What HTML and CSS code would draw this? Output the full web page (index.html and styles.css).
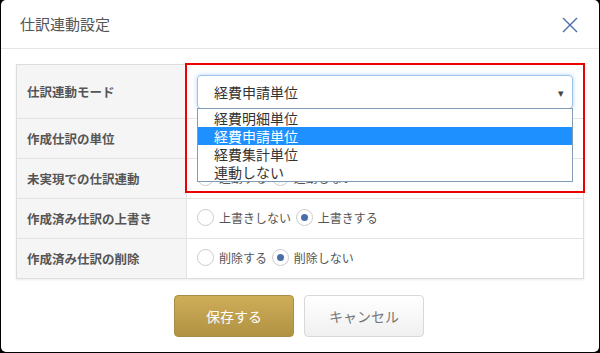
FILE: index.html
```html
<!DOCTYPE html>
<html lang="ja">
<head>
  <meta charset="UTF-8" />
  <title>仕訳連動設定</title>
  <link rel="stylesheet" href="styles.css">
</head>
<body>

  <div class="modal">
    <div class="modal-header">
      <h2>仕訳連動設定</h2>
      <svg class="close" width="16" height="16" viewBox="0 0 16 16">
        <path d="M1 1 L15 15 M15 1 L1 15" stroke="#4b6ea8" stroke-width="1.4" fill="none"/>
      </svg>
    </div>

    <div class="modal-body">
      <table class="settings">
        <tr class="first">
          <th>仕訳連動モード</th>
          <td>
            <div class="select-wrap">
              <div class="select">
                <span>経費申請単位</span>
                <span class="arrow">▾</span>
              </div>
              <ul class="options">
                <li>経費明細単位</li>
                <li class="selected">経費申請単位</li>
                <li>経費集計単位</li>
                <li>連動しない</li>
              </ul>
            </div>
          </td>
        </tr>
        <tr>
          <th>作成仕訳の単位</th>
          <td></td>
        </tr>
        <tr>
          <th>未実現での仕訳連動</th>
          <td>
            <label class="radio"><span class="dot"></span>連動する</label>
            <label class="radio"><span class="dot on"></span>連動しない</label>
          </td>
        </tr>
        <tr>
          <th>作成済み仕訳の上書き</th>
          <td>
            <label class="radio"><span class="dot"></span>上書きしない</label>
            <label class="radio"><span class="dot on"></span>上書きする</label>
          </td>
        </tr>
        <tr>
          <th>作成済み仕訳の削除</th>
          <td>
            <label class="radio"><span class="dot"></span>削除する</label>
            <label class="radio"><span class="dot on"></span>削除しない</label>
          </td>
        </tr>
      </table>
    </div>

    <div class="modal-footer">
      <button class="btn btn-save">保存する</button>
      <button class="btn btn-cancel">キャンセル</button>
    </div>

    <!-- highlight frame -->
    <div class="highlight"></div>
  </div>

</body>
</html>
```

FILE: styles.css
```css
* {
  box-sizing: border-box;
}

body {
  margin: 0;
  background: #000;
  font-family: "Noto Sans CJK JP", "Noto Sans", sans-serif;
  overflow: hidden;
}

.modal {
  position: relative;
  width: 598px;
  height: 352px;
  margin: 0 1px;
  background: #fff;
  border-radius: 5px;
}

.modal-header {
  height: 49px;
  display: flex;
  align-items: center;
  justify-content: space-between;
  padding: 0 21px 0 19px;
  border-bottom: 1px solid #e5e5e5;
}

.modal-header h2 {
  margin: 0;
  font-size: 15px;
  font-weight: normal;
  color: #555;
  line-height: 1;
  padding-bottom: 2px;
}

.close {
  display: block;
  margin-top: 2px;
}

.modal-body {
  padding: 15px 15px 0 15px;
}

.settings {
  width: 568px;
  border-collapse: collapse;
  border: 1px solid #ddd;
  box-shadow: 0 1px 2px rgba(0, 0, 0, 0.08);
}

.settings th,
.settings td {
  height: 40px;
  border-top: 1px solid #e3e3e3;
  padding: 0 10px;
  font-size: 12px;
  vertical-align: middle;
}

.settings th {
  width: 170px;
  background: #f5f5f5;
  color: #555;
  text-align: left;
  font-weight: bold;
  font-size: 12.5px;
  border-right: 1px solid #e3e3e3;
}

.settings tr.first th,
.settings tr.first td {
  height: 54px;
  border-top: none;
}

.settings td {
  color: #555;
}

.select-wrap {
  position: relative;
}

.select {
  height: 34px;
  display: flex;
  align-items: center;
  justify-content: space-between;
  padding: 0 8px 0 16px;
  border: 1px solid #9cc3ee;
  border-radius: 4px;
  box-shadow: 0 0 4px rgba(102, 170, 238, 0.5);
  font-size: 14px;
  color: #333;
}

.arrow {
  font-size: 11px;
  color: #444;
}

.options {
  position: absolute;
  top: 33px;
  left: 0;
  right: 0;
  margin: 0;
  padding: 0;
  list-style: none;
  background: #fff;
  border: 1px solid #7f9db9;
  z-index: 2;
}

.options li {
  height: 18px;
  line-height: 18px;
  padding-left: 16px;
  font-size: 14px;
  color: #333;
}

.options li.selected {
  background: #1e90ff;
  color: #fff;
}

.radio {
  display: inline-flex;
  align-items: center;
  margin-right: 2px;
  color: #555;
}

.dot {
  width: 17px;
  height: 17px;
  border: 1px solid #ccc;
  border-radius: 50%;
  margin-right: 5px;
  position: relative;
  background: #fff;
}

.dot.on::after {
  content: "";
  position: absolute;
  top: 4px;
  left: 4px;
  width: 7px;
  height: 7px;
  border-radius: 50%;
  background: #4a6fa8;
}

.modal-footer {
  display: flex;
  justify-content: center;
  gap: 10px;
  padding-top: 16px;
  padding-right: 2px;
}

.btn {
  width: 120px;
  height: 42px;
  border-radius: 4px;
  font-family: inherit;
  font-size: 14px;
}

.btn-save {
  background: linear-gradient(#cfae59, #b09243);
  border: 1px solid #a98c45;
  color: #fff;
}

.btn-cancel {
  background: linear-gradient(#fff, #f0f0f0);
  border: 1px solid #d8d8d8;
  color: #777;
}

.highlight {
  position: absolute;
  left: 184px;
  top: 63px;
  width: 400px;
  height: 130px;
  border: 2px solid #e00;
  z-index: 3;
}
```
